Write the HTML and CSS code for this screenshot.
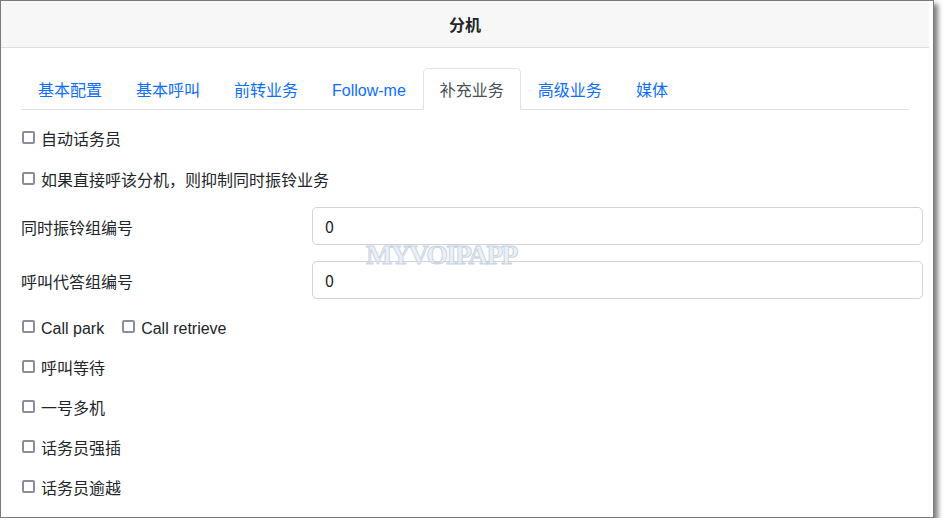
FILE: index.html
```html
<!DOCTYPE html>
<html lang="zh">
<head>
<meta charset="utf-8">
<title>分机</title>
<link rel="stylesheet" href="styles.css">
</head>
<body>
<div class="window">
  <div class="dialog">
    <div class="dialog-header">分机</div>
    <div class="dialog-body">
      <ul class="nav-tabs">
        <li class="nav-link">基本配置</li>
        <li class="nav-link">基本呼叫</li>
        <li class="nav-link">前转业务</li>
        <li class="nav-link"><span class="latin">Follow-me</span></li>
        <li class="nav-link active">补充业务</li>
        <li class="nav-link">高级业务</li>
        <li class="nav-link">媒体</li>
      </ul>
      <div class="tab-content">
        <div class="check-row"><label class="check"><input type="checkbox"><span>自动话务员</span></label></div>
        <div class="check-row"><label class="check"><input type="checkbox"><span>如果直接呼该分机，则抑制同时振铃业务</span></label></div>
        <div class="field-row"><span class="field-label">同时振铃组编号</span><input class="form-control" type="text" value="0"></div>
        <div class="field-row"><span class="field-label">呼叫代答组编号</span><input class="form-control" type="text" value="0"></div>
        <div class="check-row">
          <label class="check"><input type="checkbox"><span class="latin">Call park</span></label>
          <label class="check check-inline"><input type="checkbox"><span class="latin">Call retrieve</span></label>
        </div>
        <div class="check-row"><label class="check"><input type="checkbox"><span>呼叫等待</span></label></div>
        <div class="check-row"><label class="check"><input type="checkbox"><span>一号多机</span></label></div>
        <div class="check-row"><label class="check"><input type="checkbox"><span>话务员强插</span></label></div>
        <div class="check-row"><label class="check"><input type="checkbox"><span>话务员逾越</span></label></div>
      </div>
    </div>
  </div>
  <div class="watermark">MYVOIPAPP</div>
</div>
</body>
</html>
```

FILE: styles.css
```css
* { box-sizing: border-box; }
html, body { margin: 0; padding: 0; background: #fff; }
body {
  font-family: "Noto Sans CJK SC", "Noto Sans", sans-serif;
  font-size: 16px;
  line-height: 24px;
  color: #212529;
}
.latin {
  font-family: "Liberation Sans", "Noto Sans CJK SC", sans-serif;
}
.window {
  position: relative;
  width: 934px;
  height: 518px;
  border: 1px solid #7a7a7a;
  background: #fff;
  box-shadow: 4px 4px 5px rgba(0, 0, 0, 0.5);
  overflow: hidden;
}
.dialog {
  width: 928px;
  height: 100%;
}
.dialog-header {
  height: 47px;
  background: #f7f7f7;
  border-bottom: 1px solid #dcdcdc;
  display: flex;
  align-items: center;
  justify-content: center;
  font-weight: 700;
  font-size: 16px;
  color: #212529;
}
.dialog-body {
  padding: 20px 6px 0 20px;
}
.nav-tabs {
  list-style: none;
  margin: 0 14px 0 0;
  padding: 0;
  display: flex;
  border-bottom: 1px solid #dee2e6;
}
.nav-link {
  display: flex;
  align-items: center;
  height: 42px;
  padding: 0 16px;
  border: 1px solid transparent;
  border-top-left-radius: 5px;
  border-top-right-radius: 5px;
  margin-bottom: -1px;
  color: #0d6efd;
  line-height: 24px;
  white-space: nowrap;
}
.nav-link .latin { margin-top: 4px; }
.nav-link.active {
  color: #495057;
  background: #fff;
  border-color: #dee2e6 #dee2e6 #fff;
}
.tab-content {
  padding-top: 16px;
  display: flex;
  flex-direction: column;
  gap: 16px;
}
.check-row {
  display: flex;
  align-items: center;
  height: 24px;
}
.check-row:first-child { margin-bottom: 1px; }
.check {
  display: flex;
  align-items: center;
  height: 24px;
}
.check .latin { margin-top: 3px; }
.check-inline { margin-left: 17px; }
.check input {
  appearance: none;
  -webkit-appearance: none;
  width: 13px;
  height: 13px;
  margin: -2px 6px 0 1px;
  border: 2px solid #8c8c9a;
  border-radius: 2px;
  background: #fff;
}
.field-row {
  display: flex;
  align-items: center;
  height: 38px;
}
.field-label {
  width: 291px;
  flex: none;
  padding-top: 2px;
}
.form-control {
  flex: 1;
  height: 38px;
  padding: 6px 12px;
  border: 1px solid #ced4da;
  border-radius: 5px;
  font: inherit;
  color: #212529;
  background: #fff;
}
.watermark {
  position: absolute;
  left: 365px;
  top: 240px;
  font-family: "Liberation Serif", serif;
  font-weight: 700;
  font-size: 28px;
  line-height: 28px;
  letter-spacing: -2px;
  color: rgba(232, 238, 245, 0.85);
  -webkit-text-stroke: 1px rgba(190, 204, 220, 0.8);
  pointer-events: none;
}
```
